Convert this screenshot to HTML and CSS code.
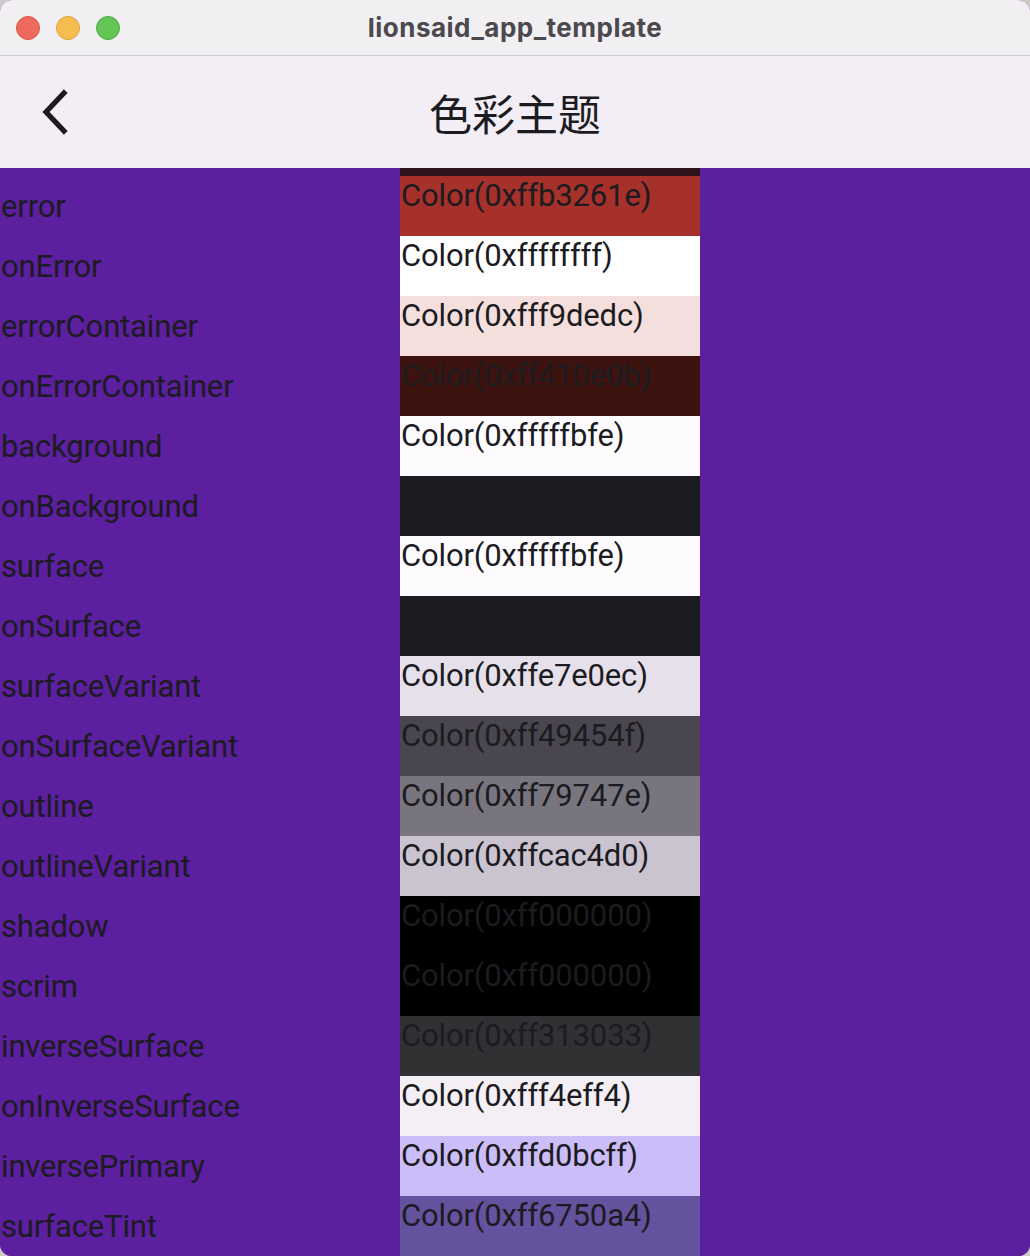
FILE: index.html
```html
<!DOCTYPE html>
<html lang="zh">
<head>
<meta charset="utf-8">
<title>lionsaid_app_template</title>
<link rel="stylesheet" href="styles.css">
</head>
<body>
<div class="window">
  <header class="titlebar">
    <div class="lights">
      <span class="light red"></span>
      <span class="light yellow"></span>
      <span class="light green"></span>
    </div>
    <div class="wintitle">lionsaid_app_template</div>
  </header>
  <div class="appbar">
    <button class="back" aria-label="back">
      <svg width="30" height="46" viewBox="0 0 30 46"><path d="M25 4 L7 23 L25 42" fill="none" stroke="#1c1b1f" stroke-width="5.2" stroke-linecap="square" stroke-linejoin="miter"/></svg>
    </button>
    <h1 class="pagetitle">色彩主题</h1>
  </div>
  <main class="list">
    <div class="peek" style="background:#2e131a"></div>
    <div class="row"><span class="name">error</span><div class="swatch" style="background:#a6302a">Color(0xffb3261e)</div></div>
    <div class="row"><span class="name">onError</span><div class="swatch" style="background:#ffffff">Color(0xffffffff)</div></div>
    <div class="row"><span class="name">errorContainer</span><div class="swatch" style="background:#f4dfdc">Color(0xfff9dedc)</div></div>
    <div class="row"><span class="name">onErrorContainer</span><div class="swatch" style="background:#3c130f">Color(0xff410e0b)</div></div>
    <div class="row"><span class="name">background</span><div class="swatch" style="background:#fdfbfe">Color(0xfffffbfe)</div></div>
    <div class="row"><span class="name">onBackground</span><div class="swatch" style="background:#1d1c20">Color(0xff1c1b1f)</div></div>
    <div class="row"><span class="name">surface</span><div class="swatch" style="background:#fdfbfe">Color(0xfffffbfe)</div></div>
    <div class="row"><span class="name">onSurface</span><div class="swatch" style="background:#1d1c20">Color(0xff1c1b1f)</div></div>
    <div class="row"><span class="name">surfaceVariant</span><div class="swatch" style="background:#e5e0e9">Color(0xffe7e0ec)</div></div>
    <div class="row"><span class="name">onSurfaceVariant</span><div class="swatch" style="background:#4a4650">Color(0xff49454f)</div></div>
    <div class="row"><span class="name">outline</span><div class="swatch" style="background:#79757e">Color(0xff79747e)</div></div>
    <div class="row"><span class="name">outlineVariant</span><div class="swatch" style="background:#cac4d0">Color(0xffcac4d0)</div></div>
    <div class="row"><span class="name">shadow</span><div class="swatch" style="background:#000000">Color(0xff000000)</div></div>
    <div class="row"><span class="name">scrim</span><div class="swatch" style="background:#000000">Color(0xff000000)</div></div>
    <div class="row"><span class="name">inverseSurface</span><div class="swatch" style="background:#313033">Color(0xff313033)</div></div>
    <div class="row"><span class="name">onInverseSurface</span><div class="swatch" style="background:#f3eff4">Color(0xfff4eff4)</div></div>
    <div class="row"><span class="name">inversePrimary</span><div class="swatch" style="background:#cbbdf8">Color(0xffd0bcff)</div></div>
    <div class="row"><span class="name">surfaceTint</span><div class="swatch" style="background:#64529e">Color(0xff6750a4)</div></div>
  </main>
</div>
</body>
</html>
```
FILE: styles.css
```css
html, body {
  margin: 0;
  padding: 0;
}
body {
  width: 1030px;
  height: 1256px;
  background: #cfcac6;
  overflow: hidden;
}
.window {
  width: 1030px;
  height: 1256px;
  border-radius: 12px;
  overflow: hidden;
  display: flex;
  flex-direction: column;
  background: #5b1f9f;
}
.titlebar {
  height: 56px;
  flex: 0 0 56px;
  box-sizing: border-box;
  background: #f2eff3;
  border-bottom: 1px solid #d2cfd4;
  display: flex;
  align-items: center;
  position: relative;
}
.lights {
  display: flex;
  gap: 16px;
  padding-left: 16px;
}
.light {
  width: 24px;
  height: 24px;
  border-radius: 50%;
  box-sizing: border-box;
}
.red { background: #ee6a5f; border: 1px solid #d9534a; }
.yellow { background: #f5be4f; border: 1px solid #dca23a; }
.green { background: #62c554; border: 1px solid #4ea943; }
.wintitle {
  position: absolute;
  left: 0;
  right: 0;
  text-align: center;
  font-family: Inter, "Noto Sans", sans-serif;
  font-weight: 700;
  font-size: 26px;
  letter-spacing: 0.5px;
  color: #4b494d;
  pointer-events: none;
}
.appbar {
  flex: 0 0 112px;
  height: 112px;
  background: #f3eef5;
  display: flex;
  align-items: center;
  position: relative;
}
.back {
  border: 0;
  background: none;
  padding: 0;
  margin-left: 39px;
  display: flex;
  align-items: center;
  margin-top: 0;
}
.pagetitle {
  position: absolute;
  left: 0;
  right: 0;
  margin: 0;
  text-align: center;
  font-family: "Noto Sans CJK SC", sans-serif;
  font-weight: 400;
  font-size: 43px;
  color: #1c1b1f;
  line-height: 1;
  pointer-events: none;
}
.list {
  flex: 1;
  overflow: hidden;
  background: #5b1f9f;
  display: flex;
  flex-direction: column;
}
.peek {
  flex: 0 0 8px;
  width: 300px;
  margin-left: 400px;
}
.row {
  flex: 0 0 60px;
  height: 60px;
  display: flex;
  font-family: Roboto, "Liberation Sans", sans-serif;
  font-size: 31px;
  letter-spacing: -0.15px;
  color: #1c1b1f;
}
.name {
  width: 400px;
  flex: 0 0 400px;
  display: flex;
  align-items: center;
  padding-left: 1px;
  box-sizing: border-box;
}
.swatch {
  width: 300px;
  flex: 0 0 300px;
  padding-left: 1px;
  padding-top: 2px;
  box-sizing: border-box;
  line-height: 1.172;
}
```
